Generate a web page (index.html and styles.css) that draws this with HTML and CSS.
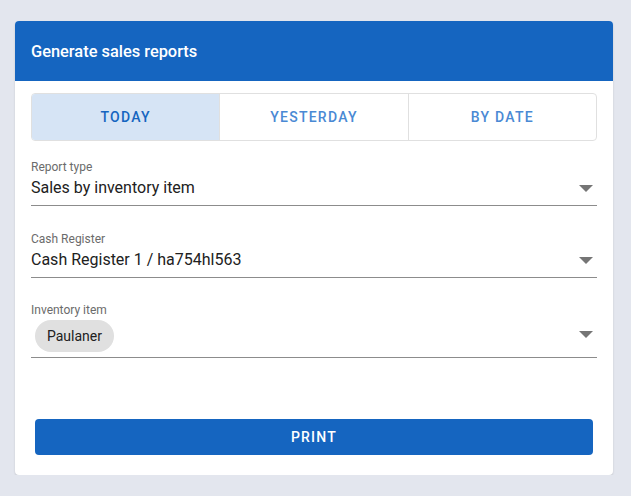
FILE: index.html
```html
<!DOCTYPE html>
<html lang="en">
<head>
  <meta charset="UTF-8" />
  <title>Generate sales reports</title>
  <link rel="stylesheet" href="styles.css">
</head>
<body>

  <div class="card">
    <div class="card-head">Generate sales reports</div>

    <div class="card-body">
      <!-- Period tabs -->
      <div class="tabs">
        <div class="tab active">TODAY</div>
        <div class="tab">YESTERDAY</div>
        <div class="tab">BY DATE</div>
      </div>

      <div class="field">
        <div class="label">Report type</div>
        <div class="select">
          <span class="value">Sales by inventory item</span>
          <span class="arrow"></span>
        </div>
      </div>

      <div class="field">
        <div class="label">Cash Register</div>
        <div class="select">
          <span class="value">Cash Register 1 / ha754hl563</span>
          <span class="arrow"></span>
        </div>
      </div>

      <div class="field field-chips">
        <div class="label">Inventory item</div>
        <div class="select chips">
          <span class="chip">Paulaner</span>
          <span class="arrow"></span>
        </div>
      </div>

      <button class="print-btn">PRINT</button>
    </div>
  </div>

</body>
</html>
```

FILE: styles.css
```css
:root {
  --blue: #1565c0;
  --blue-light: #4a89d4;
  --bg: #e3e6ee;
  --text: #212121;
  --muted: #6b6b6b;
}
* {
  margin: 0;
  padding: 0;
  box-sizing: border-box;
}
body {
  font-family: Roboto, 'Liberation Sans', sans-serif;
  background: var(--bg);
  color: var(--text);
  padding: 21px 18px 0 15px;
}

/* --- Card --- */
.card {
  width: 598px;
  height: 454px;
  background: #fff;
  border-radius: 4px;
  overflow: hidden;
  box-shadow: 0 1px 2px rgba(0,0,0,0.15);
}
.card-head {
  height: 60px;
  background: var(--blue);
  color: #fff;
  font-size: 16.4px;
  font-weight: 500;
  padding: 0 16px;
  display: flex;
  align-items: center;
}
.card-body {
  padding: 12px 16px 20px;
}

/* --- Tabs --- */
.tabs {
  display: flex;
  height: 48px;
  border: 1px solid #e0e0e0;
  border-radius: 4px;
  overflow: hidden;
}
.tab {
  flex: 1;
  display: flex;
  align-items: center;
  justify-content: center;
  font-size: 14px;
  font-weight: 500;
  letter-spacing: 1.25px;
  color: var(--blue-light);
  border-left: 1px solid #e0e0e0;
}
.tab:first-child {
  border-left: none;
}
.tab.active {
  background: #d6e4f5;
  color: var(--blue);
}

/* --- Fields --- */
.field {
  margin-top: 25px;
}
.tabs + .field {
  margin-top: 18px;
}
.field-chips {
  margin-top: 24px;
}
.label {
  font-size: 12px;
  line-height: 16px;
  color: var(--muted);
}
.select {
  display: flex;
  align-items: center;
  justify-content: space-between;
  height: 31px;
  padding-bottom: 4px;
  border-bottom: 1px solid #8c8c8c;
}
.value {
  font-size: 16px;
  line-height: 24px;
}
.select.chips {
  height: 40px;
  padding: 2px 0 5px 4px;
  align-items: flex-start;
}
.select.chips .arrow {
  margin-top: 11px;
}
.chip {
  height: 32px;
  padding: 0 12px;
  border-radius: 16px;
  background: #e0e0e0;
  font-size: 14px;
  display: flex;
  align-items: center;
}
.arrow {
  width: 0;
  height: 0;
  margin-right: 4px;
  border-left: 7px solid transparent;
  border-right: 7px solid transparent;
  border-top: 7px solid #757575;
}

/* --- Print --- */
.print-btn {
  display: block;
  width: calc(100% - 8px);
  height: 36px;
  margin: 61px 4px 0;
  border: none;
  border-radius: 4px;
  background: var(--blue);
  color: #fff;
  font-family: inherit;
  font-size: 14px;
  font-weight: 500;
  letter-spacing: 1.25px;
}
```
